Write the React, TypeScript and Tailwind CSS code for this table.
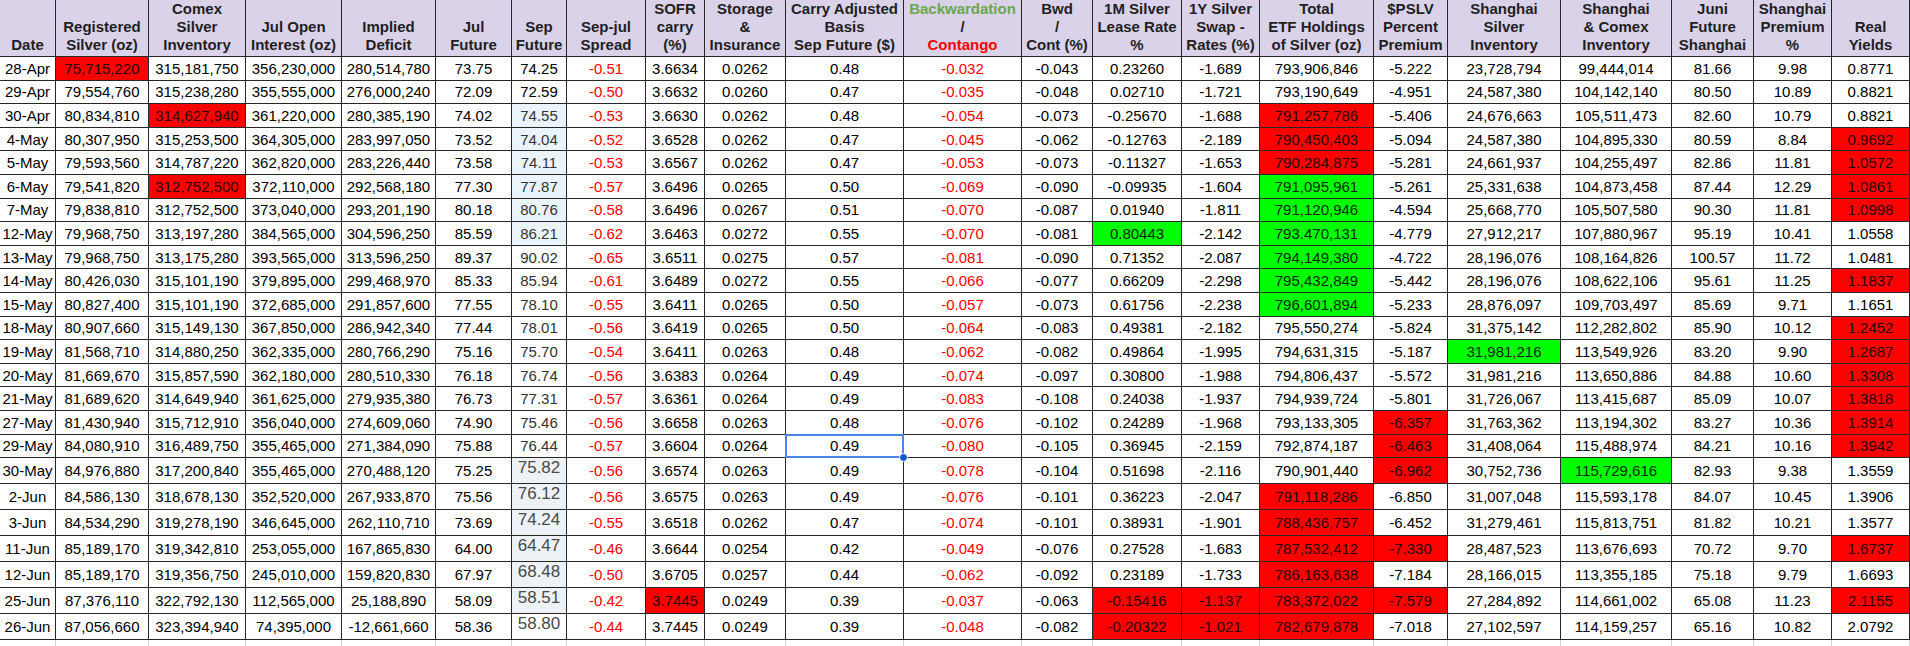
import type { ReactNode } from 'react';

const headers: ReactNode[] = [
  <>Date</>,
  <>Registered<br />Silver (oz)</>,
  <>Comex<br />Silver<br />Inventory</>,
  <>Jul Open<br />Interest (oz)</>,
  <>Implied<br />Deficit</>,
  <>Jul<br />Future</>,
  <>Sep<br />Future</>,
  <>Sep-jul<br />Spread</>,
  <>SOFR<br />carry<br />(%)</>,
  <>Storage<br />&amp;<br />Insurance</>,
  <>Carry Adjusted<br />Basis<br />Sep Future ($)</>,
  <>
    <span className="text-[#6aa84f]">Backwardation</span>
    <br />/<br />
    <span className="text-[#ff0000]">Contango</span>
  </>,
  <>Bwd<br />/<br />Cont (%)</>,
  <>1M Silver<br />Lease Rate<br />%</>,
  <>1Y Silver<br />Swap -<br />Rates (%)</>,
  <>Total<br />ETF Holdings<br />of Silver (oz)</>,
  <>$PSLV<br />Percent<br />Premium</>,
  <>Shanghai<br />Silver<br />Inventory</>,
  <>Shanghai<br />&amp; Comex<br />Inventory</>,
  <>Juni<br />Future<br />Shanghai</>,
  <>Shanghai<br />Premium<br />%</>,
  <>Real<br />Yields</>,
];

// "r:" = red fill, "g:" = green fill
const rows: string[][] = [
  ['28-Apr', 'r:75,715,220', '315,181,750', '356,230,000', '280,514,780', '73.75', '74.25', '-0.51', '3.6634', '0.0262', '0.48', '-0.032', '-0.043', '0.23260', '-1.689', '793,906,846', '-5.222', '23,728,794', '99,444,014', '81.66', '9.98', '0.8771'],
  ['29-Apr', '79,554,760', '315,238,280', '355,555,000', '276,000,240', '72.09', '72.59', '-0.50', '3.6632', '0.0260', '0.47', '-0.035', '-0.048', '0.02710', '-1.721', '793,190,649', '-4.951', '24,587,380', '104,142,140', '80.50', '10.89', '0.8821'],
  ['30-Apr', '80,834,810', 'r:314,627,940', '361,220,000', '280,385,190', '74.02', '74.55', '-0.53', '3.6630', '0.0262', '0.48', '-0.054', '-0.073', '-0.25670', '-1.688', 'r:791,257,786', '-5.406', '24,676,663', '105,511,473', '82.60', '10.79', '0.8821'],
  ['4-May', '80,307,950', '315,253,500', '364,305,000', '283,997,050', '73.52', '74.04', '-0.52', '3.6528', '0.0262', '0.47', '-0.045', '-0.062', '-0.12763', '-2.189', 'r:790,450,403', '-5.094', '24,587,380', '104,895,330', '80.59', '8.84', 'r:0.9692'],
  ['5-May', '79,593,560', '314,787,220', '362,820,000', '283,226,440', '73.58', '74.11', '-0.53', '3.6567', '0.0262', '0.47', '-0.053', '-0.073', '-0.11327', '-1.653', 'r:790,284,875', '-5.281', '24,661,937', '104,255,497', '82.86', '11.81', 'r:1.0572'],
  ['6-May', '79,541,820', 'r:312,752,500', '372,110,000', '292,568,180', '77.30', '77.87', '-0.57', '3.6496', '0.0265', '0.50', '-0.069', '-0.090', '-0.09935', '-1.604', 'g:791,095,961', '-5.261', '25,331,638', '104,873,458', '87.44', '12.29', 'r:1.0861'],
  ['7-May', '79,838,810', '312,752,500', '373,040,000', '293,201,190', '80.18', '80.76', '-0.58', '3.6496', '0.0267', '0.51', '-0.070', '-0.087', '0.01940', '-1.811', 'g:791,120,946', '-4.594', '25,668,770', '105,507,580', '90.30', '11.81', 'r:1.0998'],
  ['12-May', '79,968,750', '313,197,280', '384,565,000', '304,596,250', '85.59', '86.21', '-0.62', '3.6463', '0.0272', '0.55', '-0.070', '-0.081', 'g:0.80443', '-2.142', 'g:793.470,131', '-4.779', '27,912,217', '107,880,967', '95.19', '10.41', '1.0558'],
  ['13-May', '79,968,750', '313,175,280', '393,565,000', '313,596,250', '89.37', '90.02', '-0.65', '3.6511', '0.0275', '0.57', '-0.081', '-0.090', '0.71352', '-2.087', 'g:794,149,380', '-4.722', '28,196,076', '108,164,826', '100.57', '11.72', '1.0481'],
  ['14-May', '80,426,030', '315,101,190', '379,895,000', '299,468,970', '85.33', '85.94', '-0.61', '3.6489', '0.0272', '0.55', '-0.066', '-0.077', '0.66209', '-2.298', 'g:795,432,849', '-5.442', '28,196,076', '108,622,106', '95.61', '11.25', 'r:1.1837'],
  ['15-May', '80,827,400', '315,101,190', '372,685,000', '291,857,600', '77.55', '78.10', '-0.55', '3.6411', '0.0265', '0.50', '-0.057', '-0.073', '0.61756', '-2.238', 'g:796,601,894', '-5.233', '28,876,097', '109,703,497', '85.69', '9.71', '1.1651'],
  ['18-May', '80,907,660', '315,149,130', '367,850,000', '286,942,340', '77.44', '78.01', '-0.56', '3.6419', '0.0265', '0.50', '-0.064', '-0.083', '0.49381', '-2.182', '795,550,274', '-5.824', '31,375,142', '112,282,802', '85.90', '10.12', 'r:1.2452'],
  ['19-May', '81,568,710', '314,880,250', '362,335,000', '280,766,290', '75.16', '75.70', '-0.54', '3.6411', '0.0263', '0.48', '-0.062', '-0.082', '0.49864', '-1.995', '794,631,315', '-5.187', 'g:31,981,216', '113,549,926', '83.20', '9.90', 'r:1.2687'],
  ['20-May', '81,669,670', '315,857,590', '362,180,000', '280,510,330', '76.18', '76.74', '-0.56', '3.6383', '0.0264', '0.49', '-0.074', '-0.097', '0.30800', '-1.988', '794,806,437', '-5.572', '31,981,216', '113,650,886', '84.88', '10.60', 'r:1.3308'],
  ['21-May', '81,689,620', '314,649,940', '361,625,000', '279,935,380', '76.73', '77.31', '-0.57', '3.6361', '0.0264', '0.49', '-0.083', '-0.108', '0.24038', '-1.937', '794,939,724', '-5.801', '31,726,067', '113,415,687', '85.09', '10.07', 'r:1.3818'],
  ['27-May', '81,430,940', '315,712,910', '356,040,000', '274,609,060', '74.90', '75.46', '-0.56', '3.6658', '0.0263', '0.48', '-0.076', '-0.102', '0.24289', '-1.968', '793,133,305', 'r:-6.357', '31,763,362', '113,194,302', '83.27', '10.36', 'r:1.3914'],
  ['29-May', '84,080,910', '316,489,750', '355,465,000', '271,384,090', '75.88', '76.44', '-0.57', '3.6604', '0.0264', '0.49', '-0.080', '-0.105', '0.36945', '-2.159', '792,874,187', 'r:-6.463', '31,408,064', '115,488,974', '84.21', '10.16', 'r:1.3942'],
  ['30-May', '84,976,880', '317,200,840', '355,465,000', '270,488,120', '75.25', '75.82', '-0.56', '3.6574', '0.0263', '0.49', '-0.078', '-0.104', '0.51698', '-2.116', '790,901,440', 'r:-6.962', '30,752,736', 'g:115,729,616', '82.93', '9.38', '1.3559'],
  ['2-Jun', '84,586,130', '318,678,130', '352,520,000', '267,933,870', '75.56', '76.12', '-0.56', '3.6575', '0.0263', '0.49', '-0.076', '-0.101', '0.36223', '-2.047', 'r:791,118,286', '-6.850', '31,007,048', '115,593,178', '84.07', '10.45', '1.3906'],
  ['3-Jun', '84,534,290', '319,278,190', '346,645,000', '262,110,710', '73.69', '74.24', '-0.55', '3.6518', '0.0262', '0.47', '-0.074', '-0.101', '0.38931', '-1.901', 'r:788,436,757', '-6.452', '31,279,461', '115,813,751', '81.82', '10.21', '1.3577'],
  ['11-Jun', '85,189,170', '319,342,810', '253,055,000', '167,865,830', '64.00', '64.47', '-0.46', '3.6644', '0.0254', '0.42', '-0.049', '-0.076', '0.27528', '-1.683', 'r:787,532,412', 'r:-7.330', '28,487,523', '113,676,693', '70.72', '9.70', 'r:1.6737'],
  ['12-Jun', '85,189,170', '319,356,750', '245,010,000', '159,820,830', '67.97', '68.48', '-0.50', '3.6705', '0.0257', '0.44', '-0.062', '-0.092', '0.23189', '-1.733', 'r:786,163,638', '-7.184', '28,166,015', '113,355,185', '75.18', '9.79', '1.6693'],
  ['25-Jun', '87,376,110', '322,792,130', '112,565,000', '25,188,890', '58.09', '58.51', '-0.42', 'r:3.7445', '0.0249', '0.39', '-0.037', '-0.063', 'r:-0.15416', 'r:-1.137', 'r:783,372,022', 'r:-7.579', '27,284,892', '114,661,002', '65.08', '11.23', 'r:2.1155'],
  ['26-Jun', '87,056,660', '323,394,940', '74,395,000', '-12,661,660', '58.36', '58.80', '-0.44', '3.7445', '0.0249', '0.39', '-0.048', '-0.082', 'r:-0.20322', 'r:-1.021', 'r:782,679,878', '-7.018', '27,102,597', '114,159,257', '65.16', '10.82', '2.0792'],
];

const gridCols =
  'grid grid-cols-[56px_93px_97px_96px_94px_76px_55px_79px_59px_81px_118px_118px_71px_89px_78px_114px_74px_113px_111px_82px_78px_78px]';

function Cell({ raw, row, col }: { raw: string; row: number; col: number }) {
  const fill = raw.startsWith('r:') ? 'red' : raw.startsWith('g:') ? 'green' : null;
  const text = fill ? raw.slice(2) : raw;
  const tall = row >= 17;
  const height = tall ? 'h-[26px]' : 'h-[23.6px]';

  // Sep Future column has its own look
  if (col === 6) {
    const blue = row >= 2 && row <= 7;
    const big = row >= 17;
    const grey = row >= 17 && row <= 22;
    return (
      <div
        className={`flex justify-center border-r border-b border-[#262626] ${height} ${
          big ? 'items-start pt-[1px] text-[17px] text-[#4a4a4a]' : 'items-center text-[15px]'
        } ${row >= 2 && !big ? 'text-[#333]' : ''} ${row < 2 ? 'text-black' : ''} ${
          blue ? 'bg-[#eaf4fb]' : grey ? 'bg-[#eef2f6]' : 'bg-white'
        }`}
      >
        {text}
      </div>
    );
  }

  const redText = (col === 7 || col === 11) && !fill;
  const bg =
    fill === 'red' ? 'bg-[#ff0000] text-[#2a0000]' : fill === 'green' ? 'bg-[#00ff00] text-[#0b2a0b]' : 'bg-white';
  const selected = row === 16 && col === 10;

  return (
    <div
      className={`relative flex items-center justify-center border-r border-b border-[#262626] text-[15px] ${height} ${bg} ${
        redText ? 'text-[#ff0000]' : fill ? '' : 'text-black'
      } ${selected ? 'z-10' : ''}`}
    >
      {text}
      {selected && (
        <>
          <div className="absolute -inset-[1px] border-2 border-[#4a86e8]" />
          <div className="absolute -right-[5px] -bottom-[5px] h-[9px] w-[9px] rounded-full border border-white bg-[#1558d6]" />
        </>
      )}
    </div>
  );
}

export default function App() {
  return (
    <div className="h-[646px] w-[1910px] overflow-hidden bg-white font-['Liberation_Sans',Arial,sans-serif] leading-none">
      {/* Header */}
      <div className={gridCols}>
        {headers.map((h, i) => (
          <div
            key={i}
            className="flex h-[57px] items-end justify-center border-r border-b border-[#262626] bg-[#d9d2e9] pb-[2px] text-center text-[15px] leading-[18px] font-bold text-[#1f1f1f]"
          >
            <div>{h}</div>
          </div>
        ))}
      </div>

      {/* Body */}
      <div className={gridCols}>
        {rows.map((r, ri) =>
          r.map((v, ci) => <Cell key={`${ri}-${ci}`} raw={v} row={ri} col={ci} />)
        )}
        {rows[0].map((_, ci) => (
          <div key={`blank-${ci}`} className="h-[20px] border-r border-[#d4d4d4]" />
        ))}
      </div>
    </div>
  );
}
